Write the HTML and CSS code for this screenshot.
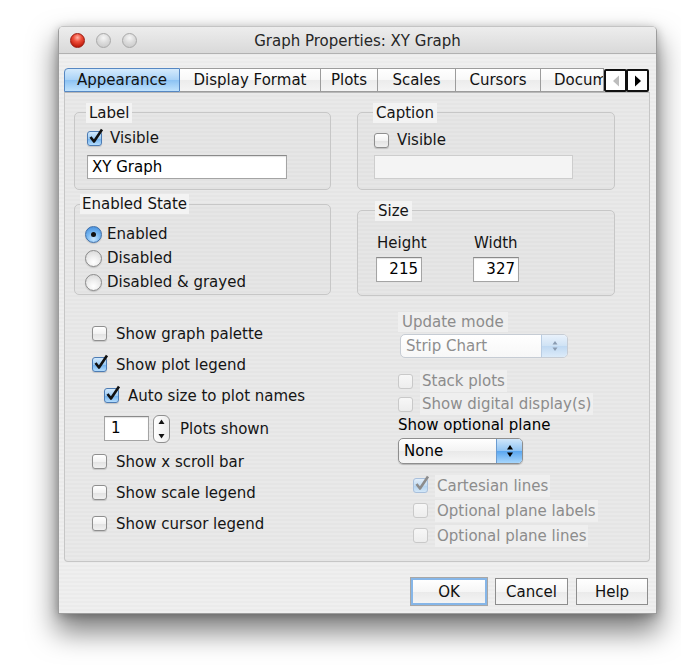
FILE: index.html
```html
<!DOCTYPE html>
<html lang="en">
<head>
<meta charset="utf-8">
<title>Graph Properties: XY Graph</title>
<link rel="stylesheet" href="styles.css">
</head>
<body>
<div class="window">
  <header class="titlebar">
    <div class="lights">
      <span class="light light-close"></span>
      <span class="light"></span>
      <span class="light"></span>
    </div>
    <div class="title">Graph Properties: XY Graph</div>
    <div></div>
  </header>

  <main class="content">
    <nav class="tabs">
      <div class="tab tab-active w-appearance">Appearance</div>
      <div class="tab w-display">Display Format</div>
      <div class="tab w-plots">Plots</div>
      <div class="tab w-scales">Scales</div>
      <div class="tab w-cursors">Cursors</div>
      <div class="tab tab-clipped w-doc">Documentation</div>
      <div class="tab-scroll">
        <span class="tab-arrow">
          <svg width="8" height="12" viewBox="0 0 8 12"><path d="M7 0.5 L1 6 L7 11.5Z" fill="#bdbdbd"/></svg>
        </span>
        <span class="tab-arrow">
          <svg width="8" height="12" viewBox="0 0 8 12"><path d="M1 0.5 L7 6 L1 11.5Z" fill="#000"/></svg>
        </span>
      </div>
    </nav>

    <section class="panel">
      <div class="groups">
        <div class="col">
          <div class="group group-label">
            <div class="legend">Label</div>
            <div class="row-check">
              <span class="cb cb-on"><svg class="tick" width="18" height="18" viewBox="0 0 18 18"><path d="M3.5 9 L7 13.5 L15 1.5" fill="none" stroke="#111" stroke-width="2.6" stroke-linejoin="round"/></svg></span>
              <span>Visible</span>
            </div>
            <div class="field field-label">XY Graph</div>
          </div>

          <div class="group group-state">
            <div class="legend">Enabled State</div>
            <div class="row-radio row-radio-first"><span class="rb rb-on"></span><span>Enabled</span></div>
            <div class="row-radio"><span class="rb"></span><span>Disabled</span></div>
            <div class="row-radio"><span class="rb"></span><span>Disabled &amp; grayed</span></div>
          </div>
        </div>

        <div class="col">
          <div class="group group-caption">
            <div class="legend">Caption</div>
            <div class="row-check">
              <span class="cb"></span>
              <span>Visible</span>
            </div>
            <div class="field field-caption"></div>
          </div>

          <div class="group group-size">
            <div class="legend">Size</div>
            <div class="size-fields">
              <div class="size-col">
                <div class="size-name">Height</div>
                <div class="field field-num">215</div>
              </div>
              <div class="size-col">
                <div class="size-name">Width</div>
                <div class="field field-num">327</div>
              </div>
            </div>
          </div>
        </div>
      </div>

      <div class="options">
        <div class="opt-left">
          <div class="opt-row"><span class="cb"></span><span>Show graph palette</span></div>
          <div class="opt-row">
            <span class="cb cb-on"><svg class="tick" width="18" height="18" viewBox="0 0 18 18"><path d="M3.5 9 L7 13.5 L15 1.5" fill="none" stroke="#111" stroke-width="2.6" stroke-linejoin="round"/></svg></span>
            <span>Show plot legend</span>
          </div>
          <div class="opt-row opt-indent">
            <span class="cb cb-on"><svg class="tick" width="18" height="18" viewBox="0 0 18 18"><path d="M3.5 9 L7 13.5 L15 1.5" fill="none" stroke="#111" stroke-width="2.6" stroke-linejoin="round"/></svg></span>
            <span>Auto size to plot names</span>
          </div>
          <div class="opt-row opt-indent opt-stepper">
            <div class="field field-count">1</div>
            <span class="stepper">
              <svg width="17" height="28" viewBox="0 0 17 28"><path d="M5.5 9 L8.5 4.5 L11.5 9Z" fill="#111"/><path d="M5.5 19 L8.5 23.5 L11.5 19Z" fill="#111"/></svg>
            </span>
            <span class="stepper-text">Plots shown</span>
          </div>
          <div class="opt-row"><span class="cb"></span><span>Show x scroll bar</span></div>
          <div class="opt-row"><span class="cb"></span><span>Show scale legend</span></div>
          <div class="opt-row"><span class="cb"></span><span>Show cursor legend</span></div>
        </div>

        <div class="opt-right">
          <div class="dim-label">Update mode</div>
          <div class="popup popup-off popup-mode">
            <span class="popup-text">Strip Chart</span>
            <span class="popup-arrows">
              <svg width="10" height="16" viewBox="0 0 10 16"><path d="M2.5 6.5 L5 3 L7.5 6.5Z" fill="#8a9bb0"/><path d="M2.5 9.5 L5 13 L7.5 9.5Z" fill="#8a9bb0"/></svg>
            </span>
          </div>
          <div class="opt-row opt-dim opt-stack"><span class="cb cb-off"></span><span class="dim-text">Stack plots</span></div>
          <div class="opt-row opt-dim opt-digital"><span class="cb cb-off"></span><span class="dim-text">Show digital display(s)</span></div>
          <div class="plain-label">Show optional plane</div>
          <div class="popup popup-plane">
            <span class="popup-text">None</span>
            <span class="popup-arrows">
              <svg width="10" height="18" viewBox="0 0 10 18"><path d="M2 7.5 L5 3 L8 7.5Z" fill="#000"/><path d="M2 10.5 L5 15 L8 10.5Z" fill="#000"/></svg>
            </span>
          </div>
          <div class="plane-opts">
            <div class="opt-row opt-dim">
              <span class="cb cb-on cb-off"><svg class="tick" width="18" height="18" viewBox="0 0 18 18"><path d="M3.5 9 L7 13.5 L15 1.5" fill="none" stroke="#8c8c8c" stroke-width="2.6" stroke-linejoin="round"/></svg></span>
              <span class="dim-text">Cartesian lines</span>
            </div>
            <div class="opt-row opt-dim"><span class="cb cb-off"></span><span class="dim-text">Optional plane labels</span></div>
            <div class="opt-row opt-dim"><span class="cb cb-off"></span><span class="dim-text">Optional plane lines</span></div>
          </div>
        </div>
      </div>
    </section>

    <footer class="buttons">
      <button class="btn btn-default w-ok">OK</button>
      <button class="btn w-cancel">Cancel</button>
      <button class="btn w-help">Help</button>
    </footer>
  </main>
</div>
</body>
</html>
```

FILE: styles.css
```css
* {
  box-sizing: border-box;
}

html,
body {
  margin: 0;
  background: #ffffff;
}

body {
  min-height: 669px;
  padding: 26px 0 0 58px;
  font-family: "DejaVu Sans", "Lucida Grande", sans-serif;
  font-size: 15px;
  color: #151515;
}

/* ---------- window frame ---------- */

.window {
  width: 599px;
  height: 588px;
  border: 1px solid #9d9d9d;
  border-top-color: #c4c4c4;
  border-radius: 5px 5px 0 0;
  background: repeating-linear-gradient(#efefef 0 2px, #ebebeb 2px 4px);
  box-shadow: 0 16px 28px 2px rgba(0, 0, 0, 0.5), 0 2px 10px rgba(0, 0, 0, 0.25);
  display: flex;
  flex-direction: column;
}

.titlebar {
  height: 27px;
  flex: none;
  display: grid;
  grid-template-columns: 1fr auto 1fr;
  align-items: center;
  background: linear-gradient(#ededed, #d9d9d9);
  border-bottom: 1px solid #b1b1b1;
  border-radius: 4px 4px 0 0;
}

.lights {
  display: flex;
  gap: 11px;
  padding-left: 11px;
}

.light {
  width: 15px;
  height: 15px;
  border-radius: 50%;
  border: 1px solid #a9a9a9;
  background: radial-gradient(circle at 50% 30%, #f6f6f6 0, #dcdcdc 45%, #c4c4c4 100%);
}

.light-close {
  border-color: #9a1a10;
  background: radial-gradient(circle at 50% 28%, #ffb4a8 0, #f0503c 35%, #c4200f 75%, #8e0f06 100%);
}

.title {
  color: #262626;
  font-size: 15px;
  padding-top: 1px;
}

.content {
  flex: 1;
  display: flex;
  flex-direction: column;
  padding: 14px 6px 0 5px;
}

/* ---------- tabs ---------- */

.tabs {
  display: flex;
  height: 24px;
  flex: none;
}

.tab {
  height: 24px;
  line-height: 23px;
  text-align: center;
  white-space: nowrap;
  border: 1px solid #9c9c9c;
  border-left: none;
  background: linear-gradient(#ffffff 0, #f8f8f8 50%, #ececec 51%, #f4f4f4 100%);
  color: #111;
}

.tab-active {
  border: 1px solid #5687c2;
  border-radius: 4px 0 0 0;
  background: linear-gradient(#d4eafc 0, #a9d2f7 50%, #8cc2f3 51%, #bfe2fd 100%);
}

.tab-clipped {
  overflow: hidden;
  text-align: left;
  padding-left: 13px;
  text-overflow: clip;
}

.w-appearance { width: 116px; }
.w-display { width: 141px; }
.w-plots { width: 57px; }
.w-scales { width: 78px; }
.w-cursors { width: 85px; }
.w-doc { width: 63px; }

.tab-scroll {
  display: flex;
  padding-top: 1px;
}

.tab-arrow {
  width: 23px;
  height: 23px;
  display: flex;
  align-items: center;
  justify-content: center;
  border: 2px solid #111;
  border-radius: 2px;
  background: #ffffff;
}

.tab-arrow + .tab-arrow {
  margin-left: -1px;
}

/* ---------- tab panel ---------- */

.panel {
  width: 586px;
  height: 470px;
  flex: none;
  border: 1px solid #c6c6c6;
  border-top-color: #b8b8b8;
  border-radius: 0 0 4px 4px;
  background: repeating-linear-gradient(#e9e9e9 0 2px, #e5e5e5 2px 4px);
}

.groups {
  display: grid;
  grid-template-columns: 257px 258px;
  column-gap: 26px;
  padding: 19px 0 0 9px;
  align-items: start;
}

.col {
  display: flex;
  flex-direction: column;
}

.group {
  border: 1px solid #c7c7c7;
  border-radius: 5px;
  background: repeating-linear-gradient(#e6e6e6 0 2px, #e2e2e2 2px 4px);
  display: flex;
  flex-direction: column;
  align-items: flex-start;
}

.legend {
  height: 20px;
  line-height: 20px;
  margin-top: -10px;
  padding: 0 3px;
  background: #f3f3f3;
}

.group-label {
  height: 78px;
  padding-left: 12px;
}

.group-label .legend {
  margin-left: -1px;
}

.group-label .row-check {
  margin-top: 3px;
}

.group-label .field {
  margin-top: 5px;
}

.group-state {
  height: 91px;
  margin-top: 14px;
  padding-left: 10px;
}

.group-state .legend {
  margin-top: -11px;
  margin-left: -5px;
  padding: 0 2px;
}

.group-caption {
  height: 78px;
  padding-left: 16px;
}

.group-caption .legend {
  margin-left: -1px;
}

.group-caption .row-check {
  margin-top: 5px;
}

.group-caption .field {
  margin-top: 3px;
}

.group-size {
  height: 86px;
  margin-top: 20px;
  padding-left: 18px;
}

.group-size .legend {
  margin-left: -1px;
}

.row-check {
  height: 24px;
  display: flex;
  align-items: center;
  gap: 8px;
}

.row-radio {
  height: 24px;
  display: flex;
  align-items: center;
  gap: 5px;
}

.row-radio-first {
  margin-top: 8px;
}

/* ---------- text fields ---------- */

.field {
  height: 24px;
  line-height: 22px;
  padding: 0 4px;
  background: #ffffff;
  border: 1px solid #a4a4a4;
  border-top-color: #8a8a8a;
  box-shadow: inset 0 1px 1px rgba(0, 0, 0, 0.12);
  color: #000;
  white-space: nowrap;
}

.field-label {
  width: 200px;
}

.field-caption {
  width: 199px;
  background: #f4f4f4;
  border-color: #cdcdcd;
  box-shadow: none;
}

.size-fields {
  display: grid;
  grid-template-columns: 46px 46px;
  column-gap: 51px;
  margin-top: 12px;
}

.size-col {
  display: flex;
  flex-direction: column;
}

.size-name {
  height: 20px;
  line-height: 20px;
  padding-left: 1px;
  white-space: nowrap;
}

.field-num {
  width: 46px;
  height: 25px;
  margin-top: 4px;
  text-align: right;
  padding-right: 3px;
}

.field-count {
  width: 45px;
  height: 25px;
  padding-left: 6px;
}

/* ---------- check boxes & radio buttons ---------- */

.cb {
  position: relative;
  flex: none;
  width: 15px;
  height: 15px;
  border: 1px solid #8f8f8f;
  border-radius: 3px;
  background: linear-gradient(#ffffff, #f2f2f2 50%, #e2e2e2 51%, #f0f0f0);
  box-shadow: 0 1px 1px rgba(0, 0, 0, 0.15);
}

.cb-on {
  border-color: #4d7cb4;
  background: linear-gradient(#d3e9fc, #9ccbf4 50%, #6eb0ee 51%, #b4dcfc);
}

.cb-off {
  border-color: #c9c9c9;
  background: linear-gradient(#f7f7f7, #ededed);
  box-shadow: none;
}

.cb-on.cb-off {
  border-color: #a9c0dc;
  background: linear-gradient(#e2eefa, #c3dcf2 50%, #b2d2ef 51%, #d3e7f8);
}

.tick {
  position: absolute;
  left: -1px;
  top: -4px;
  overflow: visible;
}

.rb {
  flex: none;
  width: 17px;
  height: 17px;
  border-radius: 50%;
  border: 1px solid #8a8a8a;
  background: radial-gradient(circle at 50% 75%, #ffffff 0, #f0f0f0 40%, #d4d4d4 100%);
  box-shadow: 0 1px 1px rgba(0, 0, 0, 0.15);
  display: flex;
  align-items: center;
  justify-content: center;
}

.rb-on {
  border-color: #3f6fa8;
  background: radial-gradient(circle at 50% 80%, #c7e6ff 0, #7ab9f2 45%, #3a86d8 100%);
}

.rb-on::after {
  content: "";
  width: 5px;
  height: 5px;
  border-radius: 50%;
  background: #111;
}

/* ---------- option lists ---------- */

.options {
  display: grid;
  grid-template-columns: 306px 1fr;
  padding-left: 27px;
}

.opt-left {
  padding-top: 22px;
  display: flex;
  flex-direction: column;
}

.opt-row {
  height: 31px;
  display: flex;
  align-items: center;
  gap: 9px;
}

.opt-indent {
  padding-left: 12px;
}

.opt-stepper {
  height: 35px;
  gap: 0;
}

.stepper {
  width: 17px;
  height: 28px;
  margin-left: 4px;
  border: 1px solid #8f8f8f;
  border-radius: 6px;
  background: linear-gradient(90deg, #ffffff, #ececec);
  display: flex;
  align-items: center;
  justify-content: center;
  overflow: hidden;
}

.stepper svg {
  flex: none;
}

.stepper-text {
  margin-left: 10px;
}

.opt-right {
  padding-top: 16px;
  display: flex;
  flex-direction: column;
  align-items: flex-start;
}

.dim-label {
  height: 20px;
  line-height: 20px;
  padding: 0 4px;
  color: #8c8c8c;
  background: #efefef;
}

.dim-text {
  color: #8c8c8c;
  background: #efefef;
  padding: 0 2px;
  margin-left: -2px;
  line-height: 22px;
}

.plain-label {
  height: 20px;
  line-height: 20px;
  color: #000;
}

.opt-dim {
  height: 24px;
}

.opt-stack {
  margin-top: 11px;
}

.opt-digital {
  height: 22px;
}

.plane-opts {
  margin-top: 9px;
  padding-left: 15px;
  display: flex;
  flex-direction: column;
}

.plane-opts .opt-row {
  height: 25px;
}

/* ---------- pop-up menus ---------- */

.popup {
  display: flex;
  align-items: stretch;
  border: 1px solid #8e8e8e;
  border-radius: 5px;
  background: linear-gradient(#ffffff, #f3f3f3 50%, #e9e9e9 51%, #f6f6f6);
  box-shadow: 0 1px 1px rgba(0, 0, 0, 0.2);
  overflow: hidden;
}

.popup-text {
  flex: 1;
  padding-left: 5px;
  line-height: 24px;
  white-space: nowrap;
}

.popup-arrows {
  width: 26px;
  display: flex;
  align-items: center;
  justify-content: center;
  border-left: 1px solid #6b9bd0;
  background: linear-gradient(#cfe6fb, #8fc3f3 50%, #5aa6ef 51%, #a7d6fc);
}

.popup-mode {
  width: 168px;
  height: 24px;
  margin: 2px 0 0 2px;
}

.popup-off {
  border-color: #c6ccd4;
  box-shadow: none;
  background: linear-gradient(#ffffff, #f7f7f7);
}

.popup-off .popup-text {
  color: #8e8e8e;
  line-height: 22px;
}

.popup-off .popup-arrows {
  border-left-color: #b9cde3;
  background: linear-gradient(#e9f2fb, #cfe2f5 50%, #c0d9f2 51%, #dcebf9);
}

.popup-plane {
  width: 125px;
  height: 26px;
  margin-top: 3px;
}

.popup-plane .popup-text {
  color: #000;
}

/* ---------- dialog buttons ---------- */

.buttons {
  display: flex;
  justify-content: flex-end;
  gap: 8px;
  margin-top: 16px;
  padding-right: 2px;
}

.btn {
  height: 27px;
  font: inherit;
  color: #111;
  border: 1px solid #8d8d8d;
  border-radius: 0;
  background: linear-gradient(#ffffff, #f6f6f6 50%, #eaeaea 51%, #f4f4f4);
  padding: 0;
}

.btn-default {
  border: 2px solid #86b6e8;
  box-shadow: 0 0 0 1px #a7a7a7;
}

.w-ok { width: 76px; }
.w-cancel { width: 73px; }
.w-help { width: 72px; }
```
